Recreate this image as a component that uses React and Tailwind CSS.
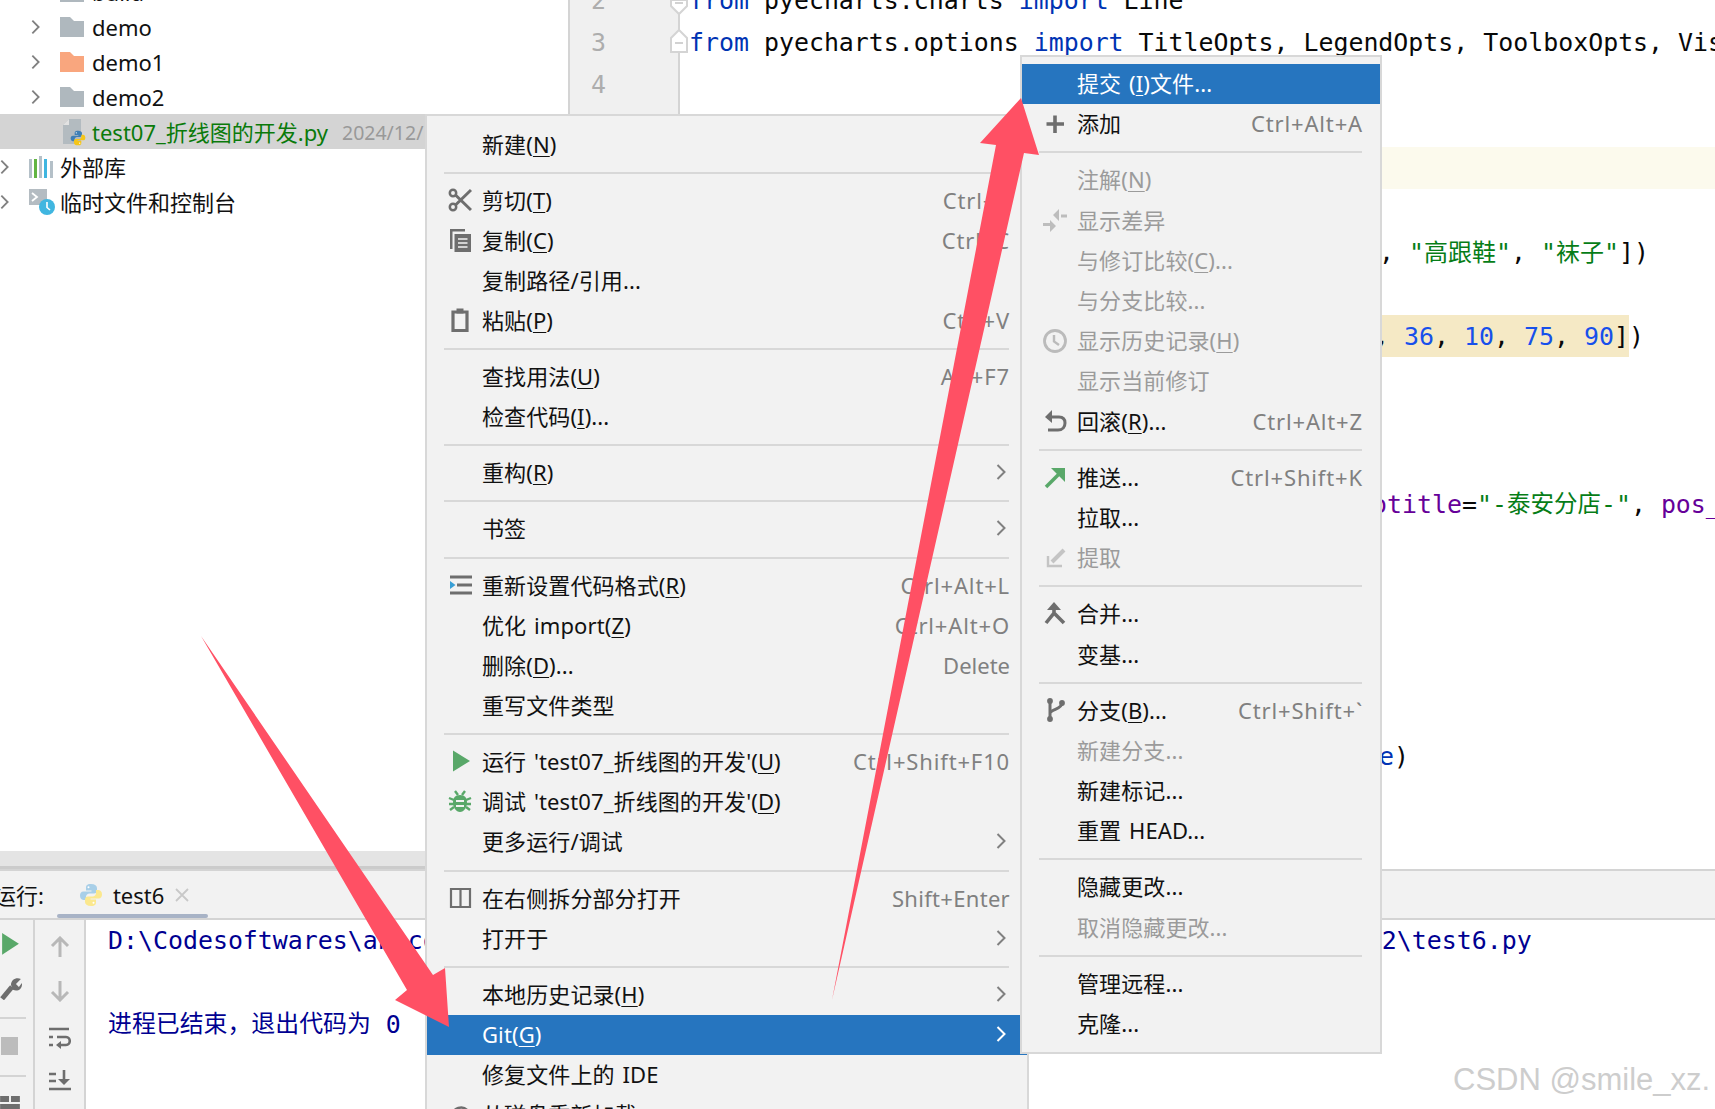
import React from "react";

const G = "#6e6e6e";
const Svg = ({ children, className = "", vb = "0 0 24 24" }) => (
  <svg viewBox={vb} className={className} fill="none">{children}</svg>
);

const Chevron = ({ color = "#808080", className = "w-[10px] h-[16px]" }) => (
  <svg viewBox="0 0 10 16" className={`shrink-0 ${className}`} fill="none">
    <path d="M1.5 1 L8.5 8 L1.5 15" stroke={color} strokeWidth="2" />
  </svg>
);

const Folder = ({ color }) => (
  <svg viewBox="0 0 24 20" className="w-[24px] h-[20px] shrink-0">
    <path d="M0 0H10L14 4H24V20H0Z" fill={color} />
  </svg>
);

const Python = ({ a = "#3f7fb5", b = "#f5c518", className = "w-[24px] h-[24px]" }) => (
  <svg viewBox="0 0 24 24" className={className}>
    <path d="M12 1C7.5 1 7 3 7 5v2.5h5.5v1H4.5C2 8.5 1 10.300 1 12.500S2 17 4.500 17H7v-3c0-2 1.500-3.500 3.500-3.500H15c1.800 0 3-1.200 3-3V5c0-2.300-2-4-6-4z" fill={a} />
    <path d="M12 23c4.500 0 5-2 5-4v-2.500h-5.500v-1h8c2.500 0 3.500-1.800 3.500-4S22 7 19.500 7H17v3c0 2-1.500 3.500-3.500 3.500H9c-1.800 0-3 1.200-3 3V19c0 2.300 2 4 6 4z" fill={b} />
    <circle cx="9.500" cy="4.200" r="1" fill="#fff" />
    <circle cx="14.500" cy="19.800" r="1" fill="#fff" />
  </svg>
);

const icons = {
  cut: (
    <Svg className="w-[24px] h-[24px]">
      <circle cx="5" cy="5" r="3.200" stroke={G} strokeWidth="2.500" />
      <circle cx="5" cy="19" r="3.200" stroke={G} strokeWidth="2.500" />
      <path d="M7.500 7 L23 22 M7.500 17 L23 2" stroke={G} strokeWidth="3" />
    </Svg>
  ),
  copy: (
    <Svg className="w-[24px] h-[24px]">
      <path d="M2 1H17V3.500H4.500V21H2Z" fill={G} />
      <path d="M6.500 6H23V24H6.500Z" fill={G} />
      <path d="M10 11H19.500M10 15H19.500M10 19H19.500" stroke="#f2f2f2" strokeWidth="1.700" />
    </Svg>
  ),
  paste: (
    <Svg className="w-[24px] h-[24px]">
      <path d="M5 4H19V22.500H5Z" stroke={G} strokeWidth="3.200" />
      <path d="M8.500 0.500H15.500V5.500H8.500Z" fill={G} />
    </Svg>
  ),
  format: (
    <Svg className="w-[24px] h-[24px]">
      <path d="M2 4H24M9 12H24M2 20H24" stroke={G} strokeWidth="3" />
      <path d="M2 8L7.500 12L2 16Z" fill="#389fd6" />
    </Svg>
  ),
  run: (
    <Svg className="w-[24px] h-[24px]">
      <path d="M5 1.500L22 12L5 22.500Z" fill="#59a869" />
    </Svg>
  ),
  bug: (
    <Svg className="w-[24px] h-[24px]">
      <path d="M12 6c5 0 7 3 7 7.500S16 23 12 23s-7-5-7-9.500S7 6 12 6z" fill="#59a869" />
      <path d="M7 2L10 6M17 2L14 6M1 9L6 11M23 9L18 11M1 15H6M23 15H18M2 21L6 18M22 21L18 18" stroke="#59a869" strokeWidth="2.400" />
      <path d="M8 12H16M8 17H16" stroke="#f2f2f2" strokeWidth="2" />
    </Svg>
  ),
  split: (
    <Svg className="w-[24px] h-[24px]">
      <path d="M3 3H22V21H3ZM12.500 3V21" stroke={G} strokeWidth="2.200" />
    </Svg>
  ),
  reload: (
    <Svg className="w-[24px] h-[24px]">
      <path d="M4 14a9 9 0 0 1 16-5M20 14a9 9 0 0 1-16 5" stroke={G} strokeWidth="2.500" />
    </Svg>
  ),
  plus: (
    <Svg className="w-[24px] h-[24px]">
      <path d="M12 3.500V21M3.500 12H21" stroke={G} strokeWidth="3.600" />
    </Svg>
  ),
  diff: (
    <Svg className="w-[24px] h-[24px]">
      <path d="M0 16.500H8M18 8H24" stroke="#bdbdbd" strokeWidth="3" />
      <path d="M7 12L13 18L7 24ZM16 1L10 7L16 13Z" fill="#bdbdbd" />
    </Svg>
  ),
  clock: (
    <Svg className="w-[24px] h-[24px]">
      <circle cx="12" cy="12" r="10.500" stroke="#bbbbbb" strokeWidth="2.800" />
      <path d="M11 6V12.500L16 16" stroke="#bbbbbb" strokeWidth="2.400" />
    </Svg>
  ),
  rollback: (
    <Svg className="w-[24px] h-[24px]">
      <path d="M4 8H16C20 8 22 10.500 22 14S20 21 15 21H5" stroke={G} strokeWidth="3" />
      <path d="M9 1L2 8L9 14Z" fill={G} />
    </Svg>
  ),
  push: (
    <Svg className="w-[24px] h-[24px]">
      <path d="M3 22L19 6" stroke="#59a869" strokeWidth="3.600" />
      <path d="M8 3H22V17Z" fill="#59a869" />
    </Svg>
  ),
  fetch: (
    <Svg className="w-[24px] h-[24px]">
      <path d="M9 16L21 4" stroke="#c4c4c4" strokeWidth="4" />
      <path d="M5 10V20H19" stroke="#c4c4c4" strokeWidth="2.400" />
    </Svg>
  ),
  merge: (
    <Svg className="w-[24px] h-[24px]">
      <path d="M11 4V11L3 21M11 11L21 21" stroke={G} strokeWidth="3.600" />
      <path d="M4 8L11 0L18 8Z" fill={G} />
    </Svg>
  ),
  branch: (
    <Svg className="w-[24px] h-[24px]">
      <circle cx="7" cy="3" r="2.900" fill={G} />
      <circle cx="7" cy="21" r="2.900" fill={G} />
      <circle cx="19" cy="5" r="2.900" fill={G} />
      <path d="M7 3V21M19 5C19 11 9 11 7 15" stroke={G} strokeWidth="3" />
    </Svg>
  ),
};

const Label = ({ text }) => {
  const i = text.indexOf("&");
  if (i < 0) return <span className="tracking-[0.1px] [word-spacing:2px]">{text}</span>;
  return (
    <span className="tracking-[0.1px] [word-spacing:2px]">
      {text.slice(0, i)}
      <span className="underline underline-offset-[3px] decoration-1">{text[i + 1]}</span>
      {text.slice(i + 2)}
    </span>
  );
};

const Sep = ({ h = "h-4" }) => (
  <div className={`${h} flex items-center ml-[17px] mr-[18px]`}>
    <div className="h-[2px] w-full bg-[#d8d8d8]" />
  </div>
);

const MenuRow = ({ item, slot, rowH, chevronPad }) => {
  const { t, k, kc, ic, arrow, on, off } = item;
  return (
    <div className={`${rowH} flex items-center pr-[17px] whitespace-nowrap ${on ? "bg-[#2675bf] text-white" : off ? "text-[#9b9b9b]" : "text-[#111111]"}`}>
      <div className={`${slot} h-full flex items-center justify-end pr-[10px] shrink-0`}>{ic && icons[ic]}</div>
      <Label text={t} />
      {k && <span className={`ml-auto text-[#808080] ${kc || "tracking-[0.85px]"}`}>{k}</span>}
      {arrow && <span className={`ml-auto flex ${chevronPad}`}><Chevron color={on ? "#ffffff" : "#808080"} /></span>}
    </div>
  );
};

const mainMenu = [
  { t: "新建(&N)" },
  { s: 1 },
  { t: "剪切(&T)", k: "Ctrl+X", ic: "cut" },
  { t: "复制(&C)", k: "Ctrl+C", ic: "copy" },
  { t: "复制路径/引用..." },
  { t: "粘贴(&P)", k: "Ctrl+V", ic: "paste" },
  { s: 1 },
  { t: "查找用法(&U)", k: "Alt+F7" },
  { t: "检查代码(&I)..." },
  { s: 1 },
  { t: "重构(&R)", arrow: 1 },
  { s: 1 },
  { t: "书签", arrow: 1 },
  { s: 2 },
  { t: "重新设置代码格式(&R)", k: "Ctrl+Alt+L", ic: "format" },
  { t: "优化 import(&Z)", k: "Ctrl+Alt+O" },
  { t: "删除(&D)...", k: "Delete", kc: "tracking-normal" },
  { t: "重写文件类型" },
  { s: 1 },
  { t: "运行 'test07_折线图的开发'(&U)", k: "Ctrl+Shift+F10", ic: "run" },
  { t: "调试 'test07_折线图的开发'(&D)", ic: "bug" },
  { t: "更多运行/调试", arrow: 1 },
  { s: 2 },
  { t: "在右侧拆分部分打开", k: "Shift+Enter", kc: "tracking-[0.3px]", ic: "split" },
  { t: "打开于", arrow: 1 },
  { s: 1 },
  { t: "本地历史记录(&H)", arrow: 1 },
  { t: "Git(&G)", arrow: 1, on: 1 },
  { t: "修复文件上的 IDE" },
  { t: "从磁盘重新加载", ic: "reload" },
];

const subMenu = [
  { t: "提交 (&I)文件...", on: 1 },
  { t: "添加", k: "Ctrl+Alt+A", ic: "plus" },
  { s: 1 },
  { t: "注解(&N)", off: 1 },
  { t: "显示差异", off: 1, ic: "diff" },
  { t: "与修订比较(&C)...", off: 1 },
  { t: "与分支比较...", off: 1 },
  { t: "显示历史记录(&H)", off: 1, ic: "clock" },
  { t: "显示当前修订", off: 1 },
  { t: "回滚(&R)...", k: "Ctrl+Alt+Z", ic: "rollback" },
  { s: 1 },
  { t: "推送...", k: "Ctrl+Shift+K", ic: "push" },
  { t: "拉取..." },
  { t: "提取", off: 1, ic: "fetch" },
  { s: 1 },
  { t: "合并...", ic: "merge" },
  { t: "变基..." },
  { s: 1 },
  { t: "分支(&B)...", k: "Ctrl+Shift+`", ic: "branch" },
  { t: "新建分支...", off: 1 },
  { t: "新建标记..." },
  { t: "重置 HEAD..." },
  { s: 1 },
  { t: "隐藏更改..." },
  { t: "取消隐藏更改...", off: 1 },
  { s: 1 },
  { t: "管理远程..." },
  { t: "克隆..." },
];

const TreeFolder = ({ name, color }) => (
  <div className="h-[35px] flex items-center pl-[31px] shrink-0">
    <Chevron className="w-[9px] h-[16px]" />
    <div className="ml-[20px]"><Folder color={color} /></div>
    <span className="ml-[8px] pt-[2px] text-[#111111]">{name}</span>
  </div>
);

const Line = ({ children, className = "" }) => (
  <div className={`h-[42px] flex items-center whitespace-pre shrink-0 pt-[2px] ${className}`}>{children}</div>
);
const Kw = ({ children }) => <span className="text-[#0033b3]">{children}</span>;
const Num = ({ children }) => <span className="text-[#1750eb]">{children}</span>;
const Str = ({ children }) => <span className="text-[#067d17]">{children}</span>;
const Cjk = ({ children, size = "text-[23.5px]" }) => <span className={`${size} text-[#067d17]`}>{children}</span>;
const Pur = ({ children }) => <span className="text-[#660099]">{children}</span>;

const GutterNum = ({ n }) => (
  <div className="h-[42px] flex items-center pt-[2px] pl-[21px] text-[#adadad] shrink-0">{n}</div>
);

export default function App() {
  const ui = "font-['Noto_Sans','Noto_Sans_CJK_SC',sans-serif]";
  const mono = "font-['DejaVu_Sans_Mono','Noto_Sans_CJK_SC',monospace]";
  return (
    <div className={`relative w-[1715px] h-[1109px] overflow-hidden bg-white text-[22px] ${ui}`}>
      {/* main area */}
      <div className="flex h-[871px] border-b-2 border-[#d4d4d4]">
        <div className="w-[570px] shrink-0 flex flex-col border-r-2 border-[#d4d4d4]">
          <div className="flex-1 flex flex-col overflow-hidden">
            <div className="-mt-[26px]">
              <TreeFolder name="build" color="#afb8be" />
              <TreeFolder name="demo" color="#afb8be" />
              <TreeFolder name="demo1" color="#f9a67e" />
              <TreeFolder name="demo2" color="#afb8be" />
              <div className="h-[35px] flex items-center pl-[63px] bg-[#d4d4d4] whitespace-nowrap">
                <div className="relative w-[24px] h-[26px] shrink-0">
                  <svg viewBox="0 0 18 25" className="absolute left-0 top-0 w-[18px] h-[25px]">
                    <path d="M6 0H18V25H0V6Z" fill="#b3bbc0" />
                    <path d="M0 6H6V0Z" fill="#e2e2e2" />
                  </svg>
                  <Python className="absolute left-[7px] top-[11px] w-[16px] h-[16px]" />
                </div>
                <span className="ml-[5px] pt-[2px] text-[#0a7a0a]">test07_折线图的开发.py</span>
                <span className="ml-[14px] pt-[2px] text-[19.5px] text-[#999999]">2024/12/</span>
              </div>
              <div className="h-[35px] flex items-center">
                <Chevron className="w-[9px] h-[16px]" />
                <svg viewBox="0 0 24 22" className="ml-[20px] w-[24px] h-[22px] shrink-0">
                  <rect x="0" y="3" width="3" height="19" fill="#b4c0c8" />
                  <rect x="5" y="3" width="3" height="19" fill="#62b543" />
                  <rect x="10" y="0" width="3" height="22" fill="#b4c0c8" />
                  <rect x="15" y="3" width="3" height="19" fill="#40b6e0" />
                  <rect x="21" y="5" width="3" height="17" fill="#b4c0c8" />
                </svg>
                <span className="ml-[7px] pt-[2px] text-[#111111]">外部库</span>
              </div>
              <div className="h-[35px] flex items-center">
                <Chevron className="w-[9px] h-[16px]" />
                <svg viewBox="0 0 26 26" className="ml-[20px] w-[26px] h-[26px] shrink-0">
                  <path d="M0 0H18V16H0Z" fill="#b4bcc2" />
                  <path d="M3 4L8 8L3 12" stroke="#ffffff" strokeWidth="1.800" fill="none" />
                  <circle cx="18" cy="18" r="8" fill="#40b6e0" />
                  <path d="M18 13V18.500L21 21" stroke="#ffffff" strokeWidth="1.600" fill="none" />
                </svg>
                <span className="ml-[5px] pt-[2px] text-[#111111]">临时文件和控制台</span>
              </div>
            </div>
          </div>
          <div className="h-[15px] bg-[#e4e4e4] border-b-[3px] border-[#cbcbcb] box-content" />
        </div>
        <div className={`w-[110px] shrink-0 bg-[#f0f0f0] border-r-[2px] border-[#d4d4d4] flex flex-col relative text-[24.9px] ${mono}`}>
          <div className="-mt-[21px]">
            <GutterNum n="2" />
            <GutterNum n="3" />
            <GutterNum n="4" />
          </div>
          <svg viewBox="0 0 20 60" className="absolute right-[-11px] top-0 w-[20px] h-[60px]">
            <path d="M2 0V6L10 14L18 6V0Z" fill="#ffffff" stroke="#d4d4d4" strokeWidth="2" />
            <path d="M2 52V38L10 30L18 38V52Z" fill="#ffffff" stroke="#d4d4d4" strokeWidth="2" />
            <path d="M6 3H14M6 43H14" stroke="#c4c4c4" strokeWidth="1.600" />
            <path d="M10 14V30" stroke="#d4d4d4" strokeWidth="2" />
          </svg>
        </div>
        <div className={`flex-1 overflow-hidden text-[24.9px] text-[#080808] ${mono}`}>
          <div className="-mt-[21px] flex flex-col">
            <Line className="pl-[9px]"><Kw>from</Kw> pyecharts.charts <Kw>import</Kw> Line</Line>
            <Line className="pl-[9px]"><Kw>from</Kw> pyecharts.options <Kw>import</Kw> TitleOpts, LegendOpts, ToolboxOpts, VisualMapOpts</Line>
            <Line />
            <Line />
            <Line className="bg-[#fcfaed]" />
            <Line />
            <Line className="pl-[699px]">, <Str>"</Str><Cjk size="text-[24px]">高跟鞋</Cjk><Str>"</Str>, <Str>"</Str><Cjk size="text-[24px]">袜子</Cjk><Str>"</Str>])</Line>
            <Line />
            <div className="h-[42px] flex whitespace-pre shrink-0 pl-[694px]">
              <span className="h-full flex items-center pt-[2px] bg-[#f5e9c5]">, <Num>36</Num>, <Num>10</Num>, <Num>75</Num>, <Num>90</Num>]</span>
              <span className="h-full flex items-center pt-[2px]">)</span>
            </div>
            <Line />
            <Line />
            <Line />
            <Line className="pl-[692px]"><Pur>otitle</Pur>=<Str>"-</Str><Cjk>泰安分店</Cjk><Str>-"</Str>, <Pur>pos_</Pur></Line>
            <Line />
            <Line />
            <Line />
            <Line />
            <Line />
            <Line className="pl-[699px]"><Kw>e</Kw>)</Line>
          </div>
        </div>
      </div>

      {/* tool window */}
      <div className="h-[47px] bg-[#f2f2f2] border-b-[2px] border-[#d4d4d4] flex items-center box-content">
        <span className="-ml-[6px] pt-[2px] text-[#111111]">运行:</span>
        <div className="relative ml-[35px] h-full flex items-center">
          <Python a="#a8cfe8" b="#fbe88e" className="w-[24px] h-[24px]" />
          <span className="ml-[10px] pt-[2px] text-[#111111]">test6</span>
          <svg viewBox="0 0 14 14" className="ml-[11px] w-[14px] h-[14px]">
            <path d="M1 1L13 13M13 1L1 13" stroke="#c8c8c8" strokeWidth="1.800" />
          </svg>
          <div className="absolute left-[-22px] w-[151px] bottom-0 h-[4px] rounded-full bg-[#a8b3c6]" />
        </div>
      </div>
      <div className="flex h-[190px]">
        <div className="w-[35px] shrink-0 border-r-2 border-[#d4d4d4] bg-[#f2f2f2] flex flex-col pt-[13px]">
          <svg viewBox="0 0 20 22" className="w-[20px] h-[22px]"><path d="M2 0L19 11L2 22Z" fill="#59a869" /></svg>
          <svg viewBox="0 0 22 24" className="mt-[22px] w-[22px] h-[24px]">
            <path d="M2 22L12 10" stroke={G} strokeWidth="5" />
            <path d="M11 8C11 3 16 0 21 2L16 7L19 10L22 6C23 12 18 15 13 13Z" fill={G} />
          </svg>
          <div className="mt-[17px] h-[2px] w-[26px] bg-[#d4d4d4]" />
          <div className="mt-[18px] ml-[1px] w-[17px] h-[18px] bg-[#bcbcbc]" />
          <div className="mt-[20px] h-[2px] w-[26px] bg-[#d4d4d4]" />
          <svg viewBox="0 0 20 14" className="mt-[19px] w-[20px] h-[14px]">
            <path d="M0 0H9V6H0ZM11 0H20V6H11ZM0 8H20V14H0Z" fill={G} />
          </svg>
        </div>
        <div className="w-[51px] shrink-0 border-r-2 border-[#d4d4d4] bg-[#f2f2f2] flex flex-col items-center pt-[16px]">
          <svg viewBox="0 0 22 22" className="w-[22px] h-[22px]"><path d="M11 21V2M3 10L11 2L19 10" stroke="#b8b8b8" strokeWidth="3" fill="none" /></svg>
          <svg viewBox="0 0 22 22" className="mt-[22px] w-[22px] h-[22px]"><path d="M11 1V20M3 12L11 20L19 12" stroke="#b8b8b8" strokeWidth="3" fill="none" /></svg>
          <svg viewBox="0 0 22 23" className="mt-[25px] w-[22px] h-[23px]">
            <path d="M0 2H20M8 10H17C22 10 22 18 17 18H10M0 10H4M0 18H4" stroke={G} strokeWidth="2.600" fill="none" />
            <path d="M12 14L7 18L12 22Z" fill={G} />
          </svg>
          <svg viewBox="0 0 22 21" className="mt-[20px] w-[22px] h-[21px]">
            <path d="M15 0V12M0 4H7M0 11H7M0 19H22" stroke={G} strokeWidth="2.600" fill="none" />
            <path d="M9 9L15 15L21 9Z" fill={G} />
          </svg>
        </div>
        <div className={`flex-1 pl-[22px] text-[24.9px] text-[#000091] whitespace-pre ${mono}`}>
          <div className="h-[42px] flex items-center">{"D:\\Codesoftwares\\anaconda3\\python.exe D:\\Codefiles\\PycharmProjects\\pythonProject\\demo2\\test6.py"}</div>
          <div className="h-[42px]" />
          <div className="h-[42px] flex items-center"><span className="text-[23.9px]">进程已结束，退出代码为</span> 0</div>
        </div>
      </div>

      {/* context menu */}
      <div className="absolute left-[425px] top-[114px] w-[604px] h-[1010px] border-2 border-[#d8d8d8] bg-[#f2f2f2] pt-[9px]">
        {mainMenu.map((m, i) =>
          m.s ? <Sep key={i} h={m.s === 2 ? "h-[17px]" : "h-4"} /> : <MenuRow key={i} item={m} slot="w-[55px]" rowH="h-10 pb-[2px]" chevronPad="pr-[4px]" />
        )}
      </div>

      {/* git submenu */}
      <div className="absolute left-[1020px] top-[55px] w-[362px] border-2 border-[#d8d8d8] bg-[#f2f2f2] pt-[7px] pb-[8px]">
        {subMenu.map((m, i) =>
          m.s ? <Sep key={i} /> : <MenuRow key={i} item={m} slot="w-[55px]" rowH="h-[40.2px] pb-[1px]" chevronPad="" />
        )}
      </div>

      {/* annotation arrows */}
      <svg viewBox="0 0 1715 1109" className="absolute inset-0 w-[1715px] h-[1109px] pointer-events-none">
        <path d="M201 636L433 975L445 968L449 1027L395 1000L407 990Z" fill="#ff5064" />
        <path d="M1021 98L1039 155L1024 153L832 1000L996 145L980 143Z" fill="#ff5064" />
      </svg>

      <div className="absolute left-[1453px] top-[1062px] font-['Liberation_Sans',sans-serif] text-[31px] leading-9 text-[#cdcdcd] whitespace-nowrap">CSDN @smile_xz.</div>
    </div>
  );
}
